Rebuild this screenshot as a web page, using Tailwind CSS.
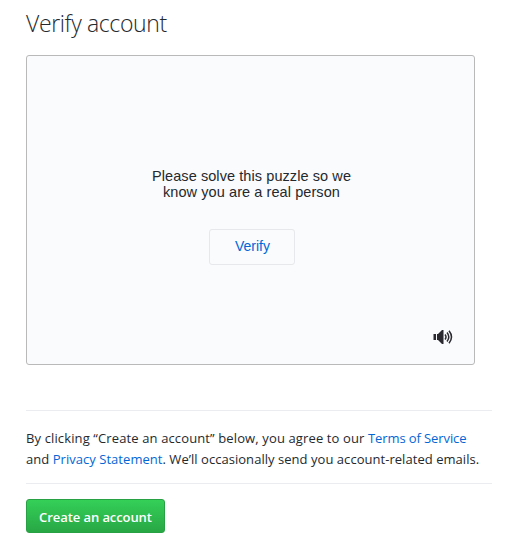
<!DOCTYPE html>
<html lang="en">
<head>
<meta charset="utf-8">
<title>Verify account</title>
<script src="https://cdn.jsdelivr.net/npm/@tailwindcss/browser@4"></script>
</head>
<body class="h-[547px] overflow-hidden bg-white pl-[26px] font-['Open_Sans','Noto_Sans',sans-serif] text-[#24292e]">
  <main class="flex w-[466px] flex-col items-start">
    <h1 class="mt-[5px] h-[50px] text-[23px] leading-9 font-light tracking-[-0.36px] whitespace-nowrap">Verify account</h1>
    <section class="flex h-[310px] w-[449px] flex-col items-center rounded-[3px] border border-[#b9b9b9] bg-[#fafbfc] pt-[112px] pl-[2px] font-['Liberation_Sans',Arial,sans-serif]">
      <p class="text-center text-[14.5px] leading-4 tracking-[0.08px] whitespace-nowrap text-[#24292e]">Please solve this puzzle so we<br>know you are a real person</p>
      <button class="mt-[29px] h-9 w-[86px] rounded-[3px] border border-[#e6e8eb] bg-[#fafbfc] pb-0.5 pl-[2px] text-sm text-[#0366d6]">Verify</button>
      <button aria-label="Audio challenge" class="mt-[63px] mr-[21px] self-end">
        <svg class="block h-[18px] w-5" viewBox="0 0 20 18" fill="none">
          <path d="M0.5 6h2.5v6H0.500zM4 6h1l4-4h1.500v14H9l-4-4H4z" fill="#2b2930"/>
          <path d="M12 6.500q2 2.500 0 5M14 4.500q3.600 4.500 0 9M16 2.800q5 6.200 0 12.400" stroke="#2b2930" stroke-width="1.5"/>
        </svg>
      </button>
    </section>
    <section class="mt-[45px] h-[74px] w-full border-y border-[#eaecef] pt-[17px] text-[13px] leading-[21px] whitespace-nowrap">
      <p class="tracking-[0.125px]">By clicking “Create an account” below, you agree to our <a class="tracking-[-0.1px] text-[#0366d6]">Terms of Service</a></p>
      <p class="tracking-[0.04px]">and <a class="text-[#0366d6]">Privacy Statement</a>. We’ll occasionally send you account-related emails.</p>
    </section>
    <button class="mt-[15px] h-[34px] w-[139px] rounded-[3px] border border-[#28a044] bg-linear-to-b from-[#34d058] to-[#28a745] pt-1 text-[13px] font-semibold tracking-[-0.08px] whitespace-nowrap text-white">Create an account</button>
  </main>
</body>
</html>
